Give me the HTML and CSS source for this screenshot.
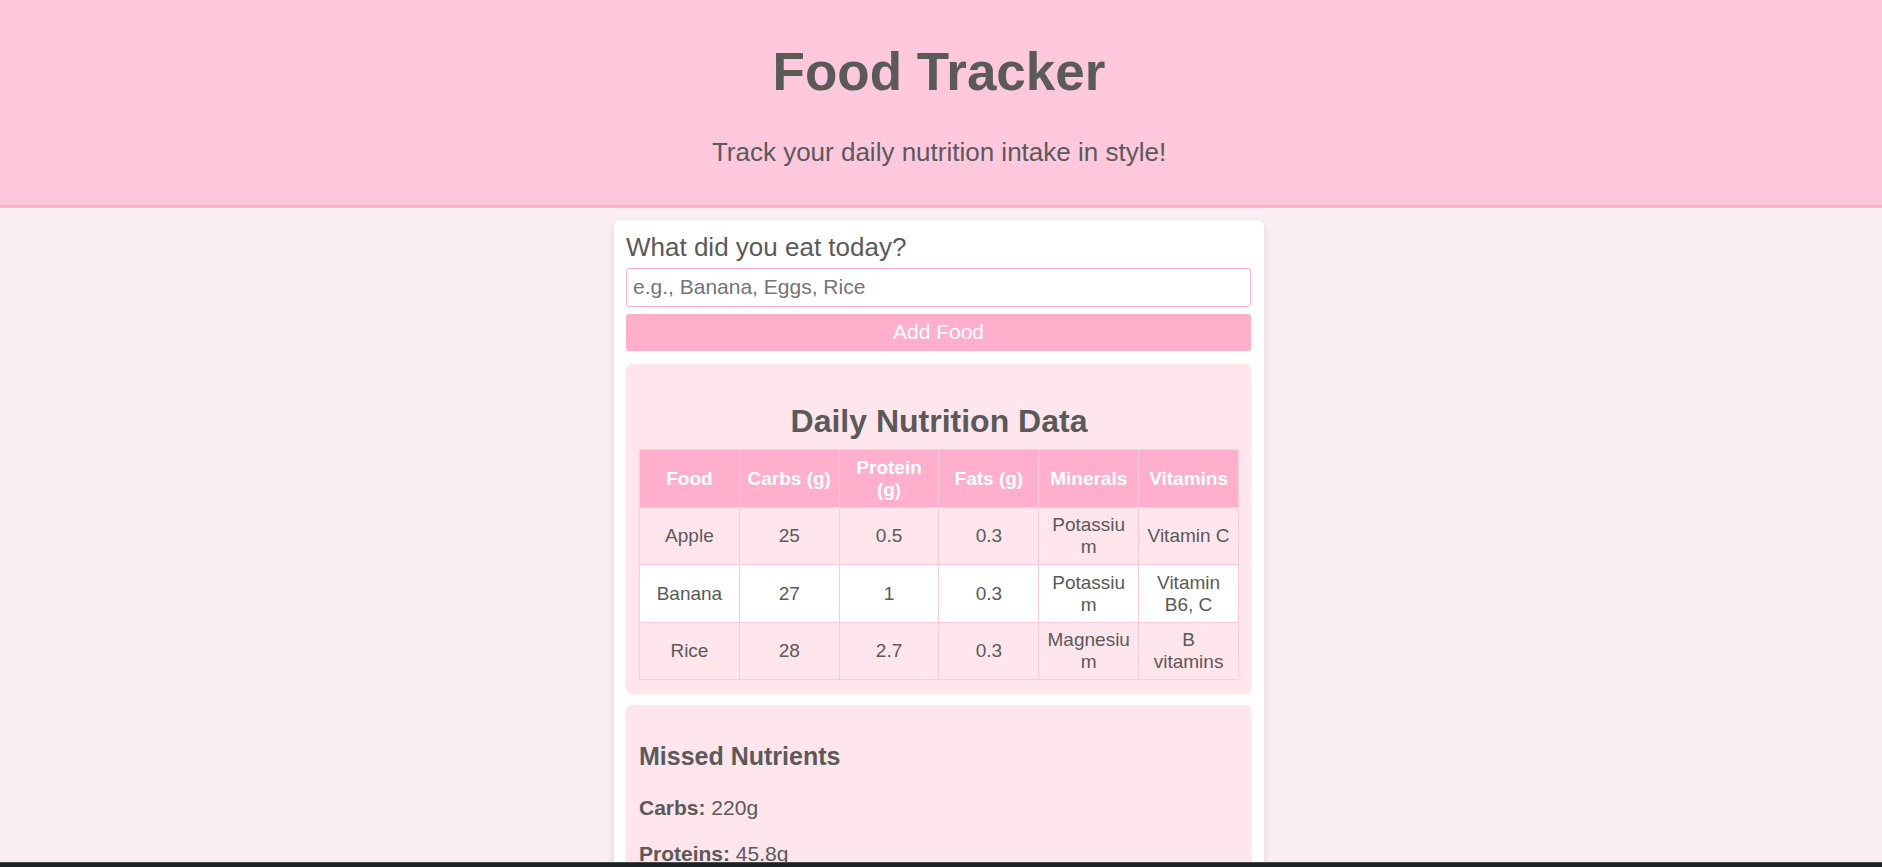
FILE: index.html
```
<!DOCTYPE html>
<html lang="en">
<head>
<meta charset="utf-8">
<title>Food Tracker</title>
<link rel="stylesheet" href="styles.css">
</head>
<body>
<div class="page">
  <header class="header">
    <h1 class="title">Food Tracker</h1>
    <p class="tagline">Track your daily nutrition intake in style!</p>
  </header>
  <main class="main">
    <div class="card">
      <form class="form">
        <label class="label" for="food">What did you eat today?</label>
        <input class="input" id="food" type="text" placeholder="e.g., Banana, Eggs, Rice">
        <button class="button" type="button">Add Food</button>
      </form>
      <section class="panel">
        <h2 class="panel-title">Daily Nutrition Data</h2>
        <table class="table">
          <thead>
            <tr><th>Food</th><th>Carbs (g)</th><th>Protein (g)</th><th>Fats (g)</th><th>Minerals</th><th>Vitamins</th></tr>
          </thead>
          <tbody>
            <tr><td>Apple</td><td>25</td><td>0.5</td><td>0.3</td><td>Potassium</td><td>Vitamin C</td></tr>
            <tr><td>Banana</td><td>27</td><td>1</td><td>0.3</td><td>Potassium</td><td>Vitamin B6, C</td></tr>
            <tr><td>Rice</td><td>28</td><td>2.7</td><td>0.3</td><td>Magnesium</td><td>B vitamins</td></tr>
          </tbody>
        </table>
      </section>
      <section class="panel">
        <h3 class="missed-title">Missed Nutrients</h3>
        <p class="nutrient"><strong>Carbs:</strong> 220g</p>
        <p class="nutrient"><strong>Proteins:</strong> 45.8g</p>
      </section>
    </div>
  </main>
</div>
<div class="taskbar"></div>
</body>
</html>
```
FILE: styles.css
```
* { box-sizing: border-box; }

body {
  display: flex;
  flex-direction: column;
  height: 100vh;
  margin: 0;
  overflow: hidden;
  background: #faedf4;
  color: #5a5a5a;
  font-family: Arial, "Liberation Sans", sans-serif;
}

.page {
  flex: 1;
  min-height: 0;
  overflow-y: auto;
  scrollbar-width: none;
}

.header {
  padding: 12px 4px 12px 0;
  background: #ffc8dd;
  border-bottom: 3px solid #ffafcc;
  text-align: center;
}

.title {
  margin: 29px 0 35px;
  font-size: 53px;
  line-height: 62px;
}

.tagline {
  margin: 0 0 26px;
  font-size: 26px;
  line-height: 29px;
}

.main { padding: 12px 4px 12px 0; }

.card {
  max-width: 650px;
  margin: 0 auto;
  padding: 12px 13px 12px 12px;
  background: #fff;
  border-radius: 6px;
  box-shadow: 0 3px 8px rgba(0, 0, 0, 0.1);
}

.form {
  display: flex;
  flex-direction: column;
  margin-bottom: 13px;
}

.label {
  margin-bottom: 6px;
  font-size: 26px;
  line-height: 30px;
}

.input {
  height: 39px;
  margin-bottom: 7px;
  padding: 5px 6px 7px;
  border: 1px solid #ffafcc;
  border-radius: 3px;
  font: 21px Arial, "Liberation Sans", sans-serif;
}

.input::placeholder { color: #757575; }

.button {
  height: 37px;
  padding: 5px 6px 7px;
  border: 0;
  border-radius: 3px;
  background: #ffafcc;
  color: #fff;
  font: 21px Arial, "Liberation Sans", sans-serif;
}

.panel {
  padding: 13px 12px 13px 13px;
  background: #ffe5ec;
  border-radius: 6px;
  box-shadow: 0 1px 3px rgba(0, 0, 0, 0.1);
}

.panel + .panel { margin-top: 12px; }

.panel-title {
  margin: 26px 0 10px;
  font-size: 32px;
  line-height: 36px;
  text-align: center;
}

.table {
  width: 100%;
  table-layout: fixed;
  border-collapse: collapse;
  border-radius: 3px;
  overflow: hidden;
  font-size: 19px;
  line-height: 22px;
  text-align: center;
}

.table th,
.table td {
  padding: 6px;
  border: 1px solid #ffc8dd;
  overflow-wrap: break-word;
}

.table th {
  background: #ffafcc;
  color: #fff;
}

.table thead tr,
.table tbody tr:nth-child(even) { height: 58px; }

.table tbody tr:nth-child(even) { background: #fff; }

.missed-title {
  margin: 24px 0 25px;
  font-size: 25px;
  line-height: 29px;
}

.nutrient {
  margin: 0 0 22px;
  font-size: 21px;
  line-height: 24px;
}

.taskbar {
  height: 5px;
  background: #1f2325;
  border-top: 1px solid #45494b;
}
```
